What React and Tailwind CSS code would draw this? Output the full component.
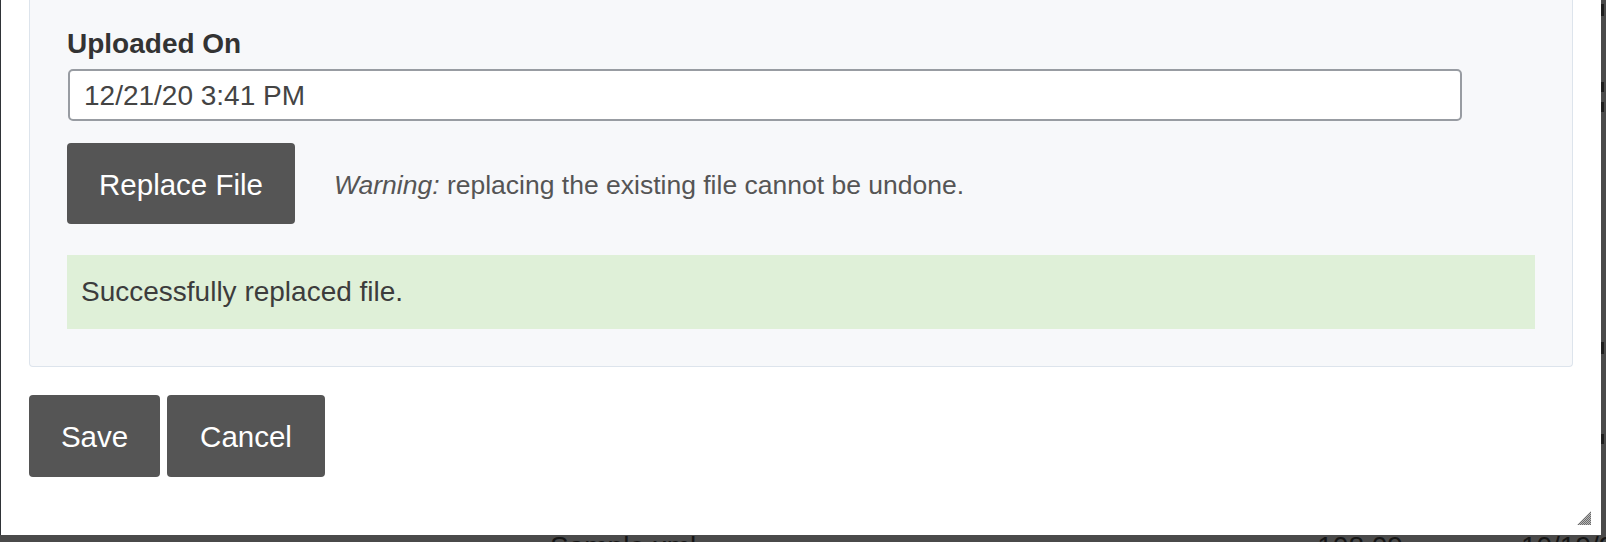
export default function App() {
  return (
    <div className="w-[1606px] h-[542px] overflow-hidden bg-[#4a4a4a] flex flex-col font-['Liberation_Sans',Arial,sans-serif]">
      <div className="flex h-[535px] shrink-0">
        <div className="w-px bg-[#2f3337]" />
        <div className="w-[1600px] bg-white relative flex flex-col px-[28px]">
          <div className="bg-[#f7f8fa] border border-t-0 border-[#dde4ec] rounded-b-[4px] px-[37px] pt-[28px] pb-[37px]">
            <div className="font-bold text-[28px] leading-[32px] text-[#333]">Uploaded On</div>
            <div className="mt-[9px] ml-px box-border w-[1394px] h-[52px] border-2 border-[#989ca2] rounded-[5px] bg-white pl-[14px] pt-[9px] text-[28px] leading-[32px] text-[#444]">
              12/21/20 3:41 PM
            </div>
            <div className="mt-[22px] flex items-center">
              <button className="w-[228px] h-[81px] pt-[2px] bg-[#555555] rounded-[4px] text-white text-[29.5px] leading-[33px]">
                Replace File
              </button>
              <p className="ml-[39px] pt-[2px] text-[26.5px] leading-[32px] text-[#555]">
                <em>Warning:</em> replacing the existing file cannot be undone.
              </p>
            </div>
            <div className="mt-[31px] h-[74px] bg-[#dff0d8] flex items-center pl-[14px] text-[28px] leading-[32px] text-[#3c3c3c]">
              Successfully replaced file.
            </div>
          </div>
          <div className="mt-[28px] flex gap-[7px]">
            <button className="w-[131px] h-[82px] bg-[#555555] rounded-[4px] text-white text-[29.5px] leading-[33px]">
              Save
            </button>
            <button className="w-[158px] h-[82px] bg-[#555555] rounded-[4px] text-white text-[29.5px] leading-[33px]">
              Cancel
            </button>
          </div>
          <svg className="absolute right-[9px] bottom-[9px]" width="16" height="16" viewBox="0 0 16 16">
            <defs>
              <pattern id="chk" width="2" height="2" patternUnits="userSpaceOnUse">
                <rect width="1" height="1" fill="#6b6b6b" />
                <rect x="1" y="1" width="1" height="1" fill="#6b6b6b" />
                <rect x="1" y="0" width="1" height="1" fill="#b8b8b8" />
                <rect x="0" y="1" width="1" height="1" fill="#b8b8b8" />
              </pattern>
            </defs>
            <polygon points="15,1 15,15 1,15" fill="url(#chk)" />
          </svg>
        </div>
        <div className="w-[5px] flex flex-col">
          <div className="h-[4px]" />
          <div className="h-[12px] w-[3px] bg-[#1e1e1e]" />
          <div className="h-[66px]" />
          <div className="h-[10px] w-[3px] bg-[#1e1e1e]" />
          <div className="h-[10px]" />
          <div className="h-[10px] w-[3px] bg-[#1e1e1e]" />
          <div className="h-[230px]" />
          <div className="h-[12px] w-[3px] bg-[#1e1e1e]" />
          <div className="h-[80px]" />
          <div className="h-[10px] w-[3px] bg-[#1e1e1e]" />
        </div>
      </div>
      <div className="h-[7px] overflow-hidden flex text-[28px] leading-[32px] text-[#151515]">
        <div className="ml-[550px] -mt-[4px]">Sample.xml</div>
        <div className="ml-[621px] -mt-[4px]">108.09 KB</div>
        <div className="ml-[118px] -mt-[4px] whitespace-nowrap">10/19/20</div>
      </div>
    </div>
  );
}
